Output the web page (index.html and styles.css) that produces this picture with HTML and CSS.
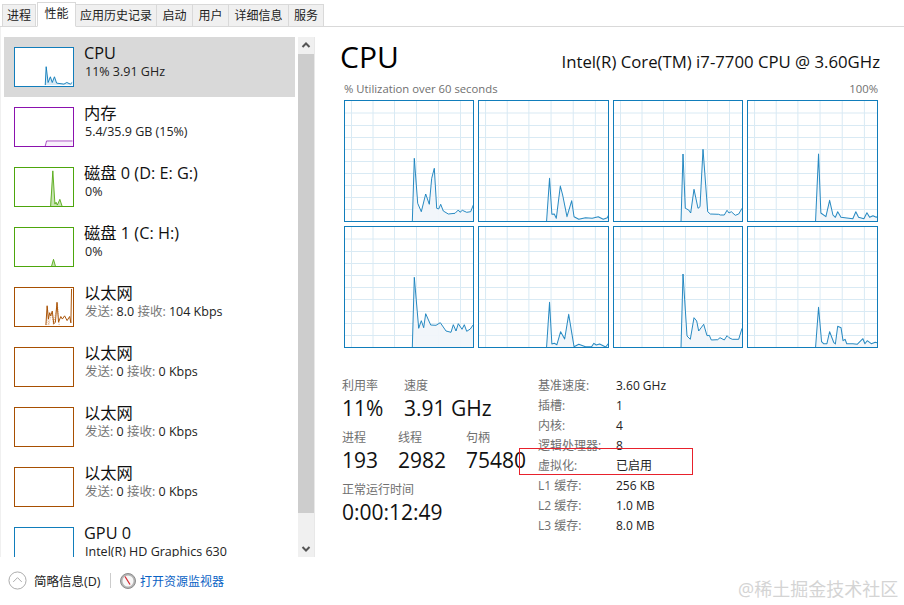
FILE: index.html
```html
<!DOCTYPE html>
<html lang="zh">
<head>
<meta charset="utf-8">
<title>任务管理器</title>
<link rel="stylesheet" href="styles.css">
</head>
<body>
<svg class="defs" width="0" height="0" aria-hidden="true">
  <defs>
    <g id="grid" class="grid-lines">
      <path d="M7.5 0V122M29 0V122M50.5 0V122M72.5 0V122M94.5 0V122M116.5 0V122"/>
      <path d="M0 13H130M0 25.5H130M0 37.5H130M0 49.5H130M0 61.5H130M0 73.5H130M0 85.5H130M0 97.5H130M0 109.5H130"/>
    </g>
  </defs>
</svg>

<nav class="tabs">
  <span class="tab tab-first">进程</span>
  <span class="tab tab-active">性能</span>
  <span class="tab tab-history">应用历史记录</span>
  <span class="tab tab-wide">启动</span>
  <span class="tab tab-wide">用户</span>
  <span class="tab tab-details">详细信息</span>
  <span class="tab">服务</span>
</nav>

<div class="content">
  <aside class="sidebar">
    <div class="list">
      <div class="item item-selected">
        <svg class="thumb thumb-cpu" viewBox="0 0 60 40"><polygon class="fill-cpu" points="31.3,39 32.3,19.7 34.3,36.3 36.7,30.3 38.7,36.3 41,30.3 43.3,37 51,38 54,36.3 57.7,38 59.7,36.3 59.7,39"/><polyline class="line-cpu" points="31.3,39 32.3,19.7 34.3,36.3 36.7,30.3 38.7,36.3 41,30.3 43.3,37 51,38 54,36.3 57.7,38 59.7,36.3"/></svg>
        <div class="item-text"><div class="item-name">CPU</div><div class="item-sub">11% 3.91 GHz</div></div>
      </div>
      <div class="item">
        <svg class="thumb thumb-mem" viewBox="0 0 60 40"><polygon class="fill-mem" points="31.3,40 32.7,34.7 60,34.7 60,40"/><polyline class="line-mem" points="31.3,40 32.7,34.7 60,34.7"/></svg>
        <div class="item-text"><div class="item-name">内存</div><div class="item-sub">5.4/35.9 GB (15%)</div></div>
      </div>
      <div class="item">
        <svg class="thumb thumb-disk" viewBox="0 0 60 40"><polygon class="fill-disk" points="36.5,40 39.3,3 41.5,38 42.7,36 44,39 46.7,33 49,40"/><polyline class="line-disk" points="37,40 39.3,3 41.5,38 42.7,36 44,39 46.7,33 49,40"/></svg>
        <div class="item-text"><div class="item-name">磁盘 0 (D: E: G:)</div><div class="item-sub">0%</div></div>
      </div>
      <div class="item">
        <svg class="thumb thumb-disk" viewBox="0 0 60 40"><polygon class="fill-disk" points="38,40 40,33 42,40"/><polyline class="line-disk" points="38,40 40,33 42,40"/></svg>
        <div class="item-text"><div class="item-name">磁盘 1 (C: H:)</div><div class="item-sub">0%</div></div>
      </div>
      <div class="item">
        <svg class="thumb thumb-net" viewBox="0 0 60 40"><polyline class="line-net-soft" points="33,39 33.6,20 35,39 38,26 40,39 44,16 46,39"/><polyline class="line-net" points="32,39 33.3,18.7 34.7,32.7 36,26 37,29.3 38.7,24.3 40.3,37.7 42,36 43.7,15 45.3,36 47.7,30 49.3,32.7 51.7,29.3 54.3,34.3 57,30 58.3,36.7 59,1"/></svg>
        <div class="item-text"><div class="item-name">以太网</div><div class="item-sub"><span class="muted">发送:</span> 8.0 <span class="muted">接收:</span> 104 Kbps</div></div>
      </div>
      <div class="item">
        <svg class="thumb thumb-net" viewBox="0 0 60 40"></svg>
        <div class="item-text"><div class="item-name">以太网</div><div class="item-sub"><span class="muted">发送:</span> 0 <span class="muted">接收:</span> 0 Kbps</div></div>
      </div>
      <div class="item">
        <svg class="thumb thumb-net" viewBox="0 0 60 40"></svg>
        <div class="item-text"><div class="item-name">以太网</div><div class="item-sub"><span class="muted">发送:</span> 0 <span class="muted">接收:</span> 0 Kbps</div></div>
      </div>
      <div class="item">
        <svg class="thumb thumb-net" viewBox="0 0 60 40"></svg>
        <div class="item-text"><div class="item-name">以太网</div><div class="item-sub"><span class="muted">发送:</span> 0 <span class="muted">接收:</span> 0 Kbps</div></div>
      </div>
      <div class="item">
        <svg class="thumb thumb-cpu" viewBox="0 0 60 40"></svg>
        <div class="item-text"><div class="item-name">GPU 0</div><div class="item-sub">Intel(R) HD Graphics 630</div></div>
      </div>
    </div>
    <div class="scrollbar">
      <svg class="arrow" viewBox="0 0 16 17"><path d="M4.5 10L8 6.5L11.5 10"/></svg>
      <div class="thumb-bar"></div>
      <svg class="arrow arrow-down" viewBox="0 0 16 17"><path d="M4.5 7L8 10.5L11.5 7"/></svg>
    </div>
  </aside>

  <main class="main">
    <header class="head">
      <h1 class="title">CPU</h1>
      <div class="model">Intel(R) Core(TM) i7-7700 CPU @ 3.60GHz</div>
    </header>
    <div class="caption"><span>% Utilization over 60 seconds</span><span>100%</span></div>
    <div class="graphs">
      <svg class="graph" viewBox="0 0 130 122" preserveAspectRatio="none"><use href="#grid"/><polygon class="area" points="68.3,122 70.3,58.3 73.7,103.3 77.3,111.7 81.7,94 85.3,104.3 87.7,78.3 90.3,68.3 92.7,108.3 94.7,109 96.7,104.3 99.3,111 104.3,114 111,113.3 114.3,110 116,112.3 118.3,110.3 122.7,112.3 126.7,111.7 129.3,105 130,122"/><polyline class="trace" points="68.3,122 70.3,58.3 73.7,103.3 77.3,111.7 81.7,94 85.3,104.3 87.7,78.3 90.3,68.3 92.7,108.3 94.7,109 96.7,104.3 99.3,111 104.3,114 111,113.3 114.3,110 116,112.3 118.3,110.3 122.7,112.3 126.7,111.7 129.3,105"/></svg>
      <svg class="graph" viewBox="0 0 130 122" preserveAspectRatio="none"><use href="#grid"/><polygon class="area" points="68,122 71,78.3 73.3,114.3 75.7,114 77.7,118.3 81.7,86 84,95 88.3,116.7 93,100.7 95.3,116.7 100,119.3 106.7,117.7 113.3,118.3 119.3,116.7 124.3,119.3 128.3,117.7 130,114.3 130,122"/><polyline class="trace" points="68,122 71,78.3 73.3,114.3 75.7,114 77.7,118.3 81.7,86 84,95 88.3,116.7 93,100.7 95.3,116.7 100,119.3 106.7,117.7 113.3,118.3 119.3,116.7 124.3,119.3 128.3,117.7 130,114.3"/></svg>
      <svg class="graph" viewBox="0 0 130 122" preserveAspectRatio="none"><use href="#grid"/><polygon class="area" points="68,122 70,54 72.3,108.3 75.7,110 77.7,113 81,89.3 85,108.3 87,106.7 90,49.3 94.7,111.7 97.3,114 105.7,114.3 107.3,115 111.3,115 114,110.3 116,113 118.3,111.7 122.3,115.3 125.7,114 129,108.3 130,122"/><polyline class="trace" points="68,122 70,54 72.3,108.3 75.7,110 77.7,113 81,89.3 85,108.3 87,106.7 90,49.3 94.7,111.7 97.3,114 105.7,114.3 107.3,115 111.3,115 114,110.3 116,113 118.3,111.7 122.3,115.3 125.7,114 129,108.3"/></svg>
      <svg class="graph" viewBox="0 0 130 122" preserveAspectRatio="none"><use href="#grid"/><polygon class="area" points="68,122 71,54 73.3,113 78.3,116.7 82,100.3 85.3,115 87.7,117.3 90,111.7 93.3,117.3 105,118.7 108,111.7 110.7,117.3 116,118.7 119,112.7 121.7,117.3 125,115.7 128.3,117.3 130,116 130,122"/><polyline class="trace" points="68,122 71,54 73.3,113 78.3,116.7 82,100.3 85.3,115 87.7,117.3 90,111.7 93.3,117.3 105,118.7 108,111.7 110.7,117.3 116,118.7 119,112.7 121.7,117.3 125,115.7 128.3,117.3 130,116"/></svg>
      <svg class="graph" viewBox="0 0 130 122" preserveAspectRatio="none"><use href="#grid"/><polygon class="area" points="68.3,122 70.3,51.3 74.7,102.3 77.3,94.7 79.7,101.7 81.7,87.7 86.7,99 92,99.3 96.3,96.7 102,105 107,106.3 109.3,98.7 112,105 114.3,97.7 118,103.3 120.3,98.7 122.7,105.3 126.3,103 129.3,98.7 130,122"/><polyline class="trace" points="68.3,122 70.3,51.3 74.7,102.3 77.3,94.7 79.7,101.7 81.7,87.7 86.7,99 92,99.3 96.3,96.7 102,105 107,106.3 109.3,98.7 112,105 114.3,97.7 118,103.3 120.3,98.7 122.7,105.3 126.3,103 129.3,98.7"/></svg>
      <svg class="graph" viewBox="0 0 130 122" preserveAspectRatio="none"><use href="#grid"/><polygon class="area" points="68,122 71,76.3 73.3,118 75.7,117.3 78.3,118.7 82,105.7 86,113 90,88.3 95.3,120.7 100,118.3 106.7,120.7 112.7,120.7 115,117.3 117.3,119 120.7,118 126.7,121 130,116.7 130,122"/><polyline class="trace" points="68,122 71,76.3 73.3,118 75.7,117.3 78.3,118.7 82,105.7 86,113 90,88.3 95.3,120.7 100,118.3 106.7,120.7 112.7,120.7 115,117.3 117.3,119 120.7,118 126.7,121 130,116.7"/></svg>
      <svg class="graph" viewBox="0 0 130 122" preserveAspectRatio="none"><use href="#grid"/><polygon class="area" points="68,122 70,48 74,110 77.3,113.3 81,91.7 83.7,95 85.7,105 90.7,98.3 94,109.7 96.3,109.3 98.3,114 104.7,113.7 107,111.7 111.3,114 114,109.7 116,111.7 119.3,113.3 125.7,113.3 129,102.3 130,122"/><polyline class="trace" points="68,122 70,48 74,110 77.3,113.3 81,91.7 83.7,95 85.7,105 90.7,98.3 94,109.7 96.3,109.3 98.3,114 104.7,113.7 107,111.7 111.3,114 114,109.7 116,111.7 119.3,113.3 125.7,113.3 129,102.3"/></svg>
      <svg class="graph" viewBox="0 0 130 122" preserveAspectRatio="none"><use href="#grid"/><polygon class="area" points="68,122 71,81.3 74,115.7 76,117.7 79.3,117.7 82,105.7 86,116.3 87.7,118 90,100.3 93.3,101.7 95.3,114.7 97.3,113.3 99,117.7 105,117.7 109.3,118.3 115,112.7 117,117.7 119.3,114.7 123.3,117.7 127.3,116.3 130,117 130,122"/><polyline class="trace" points="68,122 71,81.3 74,115.7 76,117.7 79.3,117.7 82,105.7 86,116.3 87.7,118 90,100.3 93.3,101.7 95.3,114.7 97.3,113.3 99,117.7 105,117.7 109.3,118.3 115,112.7 117,117.7 119.3,114.7 123.3,117.7 127.3,116.3 130,117"/></svg>
    </div>

    <section class="stats">
      <div class="stats-left">
        <div class="stat-row">
          <div class="stat stat-util"><div class="stat-label">利用率</div><div class="stat-value">11%</div></div>
          <div class="stat"><div class="stat-label">速度</div><div class="stat-value">3.91 GHz</div></div>
        </div>
        <div class="stat-row">
          <div class="stat stat-proc"><div class="stat-label">进程</div><div class="stat-value">193</div></div>
          <div class="stat stat-thread"><div class="stat-label">线程</div><div class="stat-value">2982</div></div>
          <div class="stat"><div class="stat-label">句柄</div><div class="stat-value">75480</div></div>
        </div>
        <div class="stat-row">
          <div class="stat"><div class="stat-label">正常运行时间</div><div class="stat-value">0:00:12:49</div></div>
        </div>
      </div>
      <dl class="specs">
        <dt>基准速度:</dt><dd>3.60 GHz</dd>
        <dt>插槽:</dt><dd>1</dd>
        <dt>内核:</dt><dd>4</dd>
        <dt>逻辑处理器:</dt><dd>8</dd>
        <dt>虚拟化:</dt><dd>已启用</dd>
        <dt>L1 缓存:</dt><dd>256 KB</dd>
        <dt>L2 缓存:</dt><dd>1.0 MB</dd>
        <dt>L3 缓存:</dt><dd>8.0 MB</dd>
      </dl>
    </section>
  </main>
</div>

<footer class="footer">
  <svg class="collapse" viewBox="0 0 20 20"><circle cx="10" cy="10" r="9"/><path d="M5.5 11.5L10 7L14.5 11.5"/></svg>
  <span class="fewer">简略信息(D)</span>
  <span class="sep"></span>
  <svg class="monitor" viewBox="0 0 18 18"><circle class="mon-ring" cx="9" cy="9" r="7.5"/><circle class="mon-face" cx="9" cy="9" r="5.5"/><path class="mon-needle" d="M6 4.5L11 12.5"/></svg>
  <a class="link">打开资源监视器</a>
</footer>

<div class="highlight"></div>
<div class="watermark">@稀土掘金技术社区</div>
</body>
</html>
```
FILE: styles.css
```css
* { box-sizing: border-box; }
html, body { margin: 0; padding: 0; }
body {
  width: 904px;
  height: 605px;
  overflow: hidden;
  position: relative;
  background: #fff;
  color: #1a1a1a;
  font-family: "Open Sans", "Noto Sans CJK SC", sans-serif;
  font-size: 12px;
}
.defs { position: absolute; }

.tabs {
  display: flex;
  align-items: flex-end;
  height: 27px;
  padding-left: 2px;
  border-bottom: 1px solid #d9d9d9;
}
.tab {
  width: 35px;
  height: 23px;
  margin-bottom: -1px;
  background: #f0f0f0;
  border: 1px solid #d9d9d9;
  border-left-width: 0;
  text-align: center;
  line-height: 22px;
  font-size: 12px;
  color: #222;
}
.tab-first { border-left-width: 1px; width: 34px; }
.tab-active {
  width: 39px;
  height: 25px;
  margin-left: 1px;
  background: #fff;
  border-bottom-color: #fff;
  border-left-width: 1px;
  line-height: 21px;
}
.tab-history { width: 81px; }
.tab-wide { width: 36px; }
.tab-details { width: 60px; }

.content { display: flex; height: 530px; }

.sidebar {
  display: flex;
  width: 316px;
  padding: 10px 0 0 4px;
  border-left: 1px solid #f0f0f0;
}
.list { width: 291px; height: 520px; overflow: hidden; margin-left: -1px; }
.item {
  display: flex;
  height: 60px;
  padding: 10px 0 0 10px;
  flex: none;
}
.item-selected { background: #d9d9d9; }
.thumb { width: 60px; height: 40px; flex: none; background: #fff; border-width: 1px; border-style: solid; display: block; overflow: hidden; }
.thumb-cpu { border-color: #117dbb; }
.thumb-mem { border-color: #8b12ae; }
.thumb-disk { border-color: #4da60c; }
.thumb-net { border-color: #a74f01; }
.fill-cpu { fill: #d9e9f4; }
.line-cpu { fill: none; stroke: #117dbb; stroke-width: 1; }
.fill-mem { fill: #f8f0fb; }
.line-mem { fill: none; stroke: #8b12ae; stroke-width: 1; opacity: .75; }
.fill-disk { fill: #c9e4b4; }
.line-disk { fill: none; stroke: #4da60c; stroke-width: .9; }
.line-net { fill: none; stroke: #a74f01; stroke-width: 1; }
.line-net-soft { fill: none; stroke: #dca77a; stroke-width: 1; stroke-dasharray: 1 1; }
.item-text { margin-left: 10px; margin-top: -4px; }
.item-name { font-size: 16.3px; line-height: 20px; color: #111; }
.item-sub { font-size: 12.5px; line-height: 17px; margin-left: 1px; color: #222; white-space: nowrap; }
.muted { color: #777; }

.scrollbar {
  width: 17px;
  height: 520px;
  margin-left: 3px;
  background: #f0f0f0;
  display: flex;
  flex-direction: column;
  border-right: 1px solid #e8e8e8;
}
.arrow { width: 16px; height: 17px; flex: none; display: block; }
.arrow path { fill: none; stroke: #555; stroke-width: 2; }
.thumb-bar { width: 16px; height: 459px; background: #cdcdcd; }
.arrow-down { margin-top: 27px; }

.main { flex: 1; padding: 10px 26px 0 24px; position: relative; }
.head { display: flex; justify-content: space-between; align-items: baseline; height: 40px; margin-right: -2px; }
.title { margin: 0; font-size: 30px; font-weight: 400; line-height: 40px; color: #000; }
.model { font-size: 16.75px; color: #111; }
.caption {
  display: flex;
  justify-content: space-between;
  margin: 3px 0 0 4px;
  height: 20px;
  line-height: 18px;
  font-size: 11.3px;
  color: #707070;
}
.graphs {
  display: grid;
  grid-template-columns: 130px 131px 130px 131px;
  grid-auto-rows: 122px;
  gap: 4px;
  margin-left: 4px;
}
.graph { display: block; width: 100%; height: 122px; outline: 1px solid #117dbb; outline-offset: -1px; background: #fff; }
.grid-lines path { fill: none; stroke: #d9eaf4; stroke-width: 1; }
.area { fill: #f1f6fa; opacity: .95; }
.trace { fill: none; stroke: #117dbb; stroke-width: 1; stroke-linejoin: round; opacity: .9; }

.stats { display: flex; margin: 29px 0 0 2px; }
.stats-left { width: 196px; flex: none; }
.stat-row { display: flex; height: 52px; }
.stat { flex: none; }
.stat-util { width: 62px; }
.stat-proc { width: 56px; }
.stat-thread { width: 68px; }
.stat-label { font-size: 12px; line-height: 17px; color: #707070; }
.stat-value { font-size: 21px; line-height: 29px; color: #111; white-space: nowrap; }

.specs {
  margin: 0;
  display: grid;
  grid-template-columns: 78px auto;
  grid-auto-rows: 20px;
  line-height: 17px;
  font-size: 12px;
}
.specs dt { color: #707070; white-space: nowrap; }
.specs dd { margin: 0; color: #222; }

.footer { display: flex; align-items: center; height: 48px; padding: 0 0 1px 8px; }
.collapse { width: 19px; height: 19px; flex: none; }
.collapse circle { fill: #fff; stroke: #a8a8a8; stroke-width: 1; }
.collapse path { fill: none; stroke: #a8a8a8; stroke-width: 1; }
.fewer { margin-left: 7px; font-size: 12.5px; color: #222; width: 75px; white-space: nowrap; }
.sep { width: 1px; height: 15px; background: #ccc; margin-left: 1px; }
.monitor { width: 18px; height: 18px; margin-left: 8px; flex: none; }
.mon-ring { fill: #b5b5b5; stroke: #8c8c8c; }
.mon-face { fill: #f7f7f7; }
.mon-needle { stroke: #d6252e; stroke-width: 1.3; fill: none; }
.link { margin-left: 3px; color: #0a62c4; font-size: 12px; }

.highlight {
  position: absolute;
  left: 519px;
  top: 448px;
  width: 174px;
  height: 27px;
  border: 1px solid #e8212c;
}
.watermark {
  position: absolute;
  left: 738px;
  top: 577px;
  font-size: 18px;
  line-height: 24px;
  color: #d4d4d4;
  white-space: nowrap;
}
```
